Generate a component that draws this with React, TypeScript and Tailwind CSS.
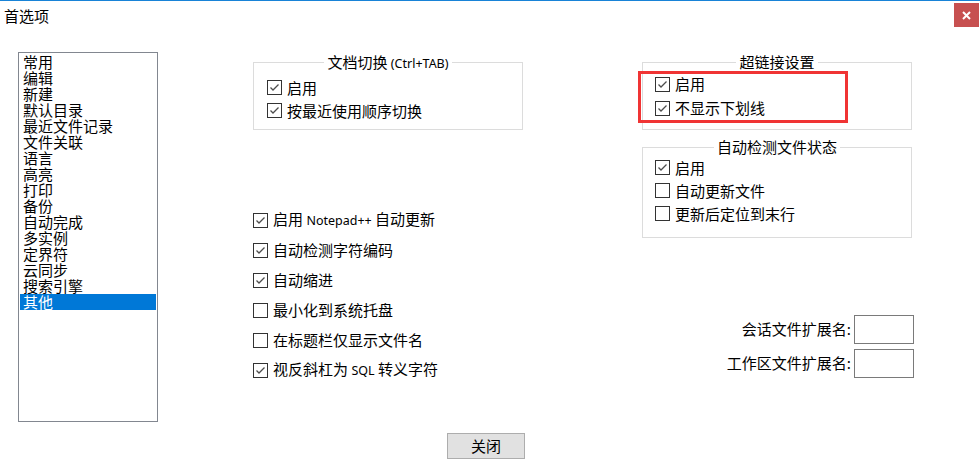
import type { ReactNode } from 'react'

const menuItems = [
  '常用', '编辑', '新建', '默认目录', '最近文件记录', '文件关联', '语言', '高亮',
  '打印', '备份', '自动完成', '多实例', '定界符', '云同步', '搜索引擎', '其他',
]

const otherOptions: { label: ReactNode; checked: boolean }[] = [
  { label: <>启用 <span className="font-['Noto_Sans'] text-[12.5px]">Notepad++</span> 自动更新</>, checked: true },
  { label: '自动检测字符编码', checked: true },
  { label: '自动缩进', checked: true },
  { label: '最小化到系统托盘', checked: false },
  { label: '在标题栏仅显示文件名', checked: false },
  { label: <>视反斜杠为 <span className="font-['Noto_Sans'] text-[12.5px]">SQL</span> 转义字符</>, checked: true },
]

function CheckBox({ checked }: { checked: boolean }) {
  return (
    <span className="inline-flex w-[15px] h-[15px] shrink-0 border border-[#333] bg-white items-center justify-center">
      {checked && (
        <svg width="13" height="13" viewBox="0 0 13 13">
          <polyline points="2.5,6.5 5,9 10.5,3.5" fill="none" stroke="#4d4d4d" strokeWidth="1.3" />
        </svg>
      )}
    </span>
  )
}

function CheckRow({ label, checked, h }: { label: ReactNode; checked: boolean; h: string }) {
  return (
    <div className={`flex items-center gap-[5px] ${h}`}>
      <CheckBox checked={checked} />
      <span className="leading-[18px] whitespace-nowrap">{label}</span>
    </div>
  )
}

function GroupBox({ title, className, children }: { title: ReactNode; className: string; children: ReactNode }) {
  return (
    <div className={`border border-[#dcdcdc] ${className}`}>
      <div className="flex justify-center -mt-[10px]">
        <span className="bg-white px-[3px] leading-[18px] whitespace-nowrap">{title}</span>
      </div>
      {children}
    </div>
  )
}

export default function App() {
  return (
    <div className="w-[980px] h-[472px] overflow-hidden bg-white border-t border-[#1883d7] text-[15px] text-black font-['Noto_Sans_CJK_SC','Noto_Sans',sans-serif]">
      {/* Title bar */}
      <div className="flex items-start h-[29px]">
        <div className="pl-[4px] pt-[6px] leading-[18px]">首选项</div>
        <button className="ml-auto mr-[1px] mt-[2px] w-[25px] h-[24px] bg-[#c75050] flex items-center justify-center">
          <svg width="9" height="9" viewBox="0 0 9 9">
            <path d="M1 1 L8 8 M8 1 L1 8" stroke="#fff" strokeWidth="2" />
          </svg>
        </button>
      </div>

      {/* Body */}
      <div className="flex pl-[18px] mt-[22px] h-[370px]">
        {/* Category list */}
        <div className="w-[140px] h-[370px] border border-[#828790] pt-[1px]">
          {menuItems.map((item) => (
            <div
              key={item}
              className={`mx-[1px] pl-[3px] h-[16px] leading-[16px] whitespace-nowrap ${
                item === '其他' ? 'bg-[#0078d7] text-white' : ''
              }`}
            >
              {item}
            </div>
          ))}
        </div>

        {/* Middle column */}
        <div className="ml-[95px] w-[270px] pt-[10px]">
          <GroupBox
            className="h-[68px]"
            title={<>文档切换 <span className="font-['Noto_Sans'] text-[12.5px]">(Ctrl+TAB)</span></>}
          >
            <div className="pl-[13px] mt-[3px]">
              <CheckRow label="启用" checked h="h-[23px]" />
              <CheckRow label="按最近使用顺序切换" checked h="h-[23px]" />
            </div>
          </GroupBox>

          <div className="mt-[75px]">
            {otherOptions.map((o, i) => (
              <CheckRow key={i} label={o.label} checked={o.checked} h="h-[30px]" />
            ))}
          </div>
        </div>

        {/* Right column */}
        <div className="ml-[119px] w-[272px] pt-[10px]">
          <div className="relative w-[270px]">
            <GroupBox className="h-[68px]" title="超链接设置">
              <div className="pl-[12px] mt-[1px]">
                <CheckRow label="启用" checked h="h-[24px]" />
                <CheckRow label="不显示下划线" checked h="h-[24px]" />
              </div>
            </GroupBox>
            {/* annotation frame */}
            <div className="absolute left-[-4px] top-[9px] w-[210px] h-[52px] border-[3px] border-[#f03434]" />
          </div>

          <GroupBox className="w-[270px] h-[91px] mt-[17px]" title="自动检测文件状态">
            <div className="pl-[12px] mt-[0px]">
              <CheckRow label="启用" checked h="h-[23px]" />
              <CheckRow label="自动更新文件" checked={false} h="h-[23px]" />
              <CheckRow label="更新后定位到末行" checked={false} h="h-[23px]" />
            </div>
          </GroupBox>

          <div className="mt-[77px] flex flex-col gap-[5px]">
            <div className="flex items-center justify-end gap-[3px]">
              <span className="whitespace-nowrap">会话文件扩展名:</span>
              <div className="w-[60px] h-[29px] border border-[#7a7a7a] bg-white" />
            </div>
            <div className="flex items-center justify-end gap-[3px]">
              <span className="whitespace-nowrap">工作区文件扩展名:</span>
              <div className="w-[60px] h-[29px] border border-[#7a7a7a] bg-white" />
            </div>
          </div>
        </div>
      </div>

      {/* Footer */}
      <div className="mt-[11px] pl-[447px]">
        <button className="w-[78px] h-[26px] border border-[#adadad] bg-[#e1e1e1] leading-[18px]">关闭</button>
      </div>
    </div>
  )
}
